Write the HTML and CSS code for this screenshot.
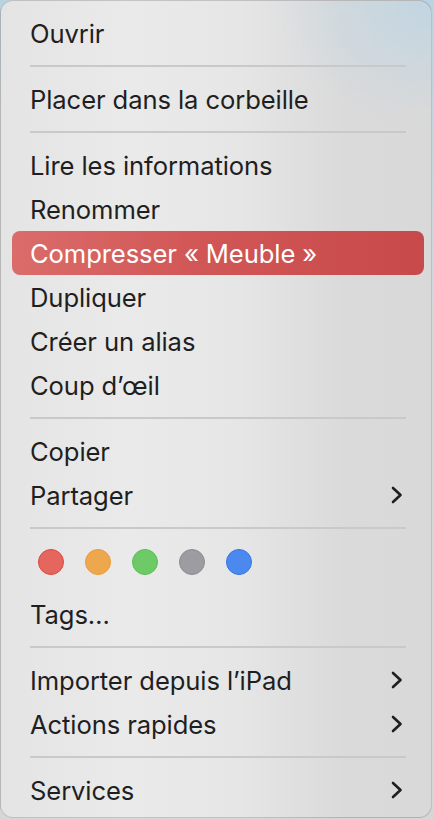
FILE: index.html
```html
<!DOCTYPE html>
<html lang="fr">
<head>
<meta charset="utf-8">
<title>Menu contextuel</title>
<link rel="stylesheet" href="styles.css">
</head>
<body>

<div class="menu">
    <div class="item">Ouvrir</div>
    <div class="sep"></div>
    <div class="item">Placer dans la corbeille</div>
    <div class="sep"></div>
    <div class="item">Lire les informations</div>
    <div class="item">Renommer</div>
    <div class="item cur">Compresser « Meuble »</div>
    <div class="item">Dupliquer</div>
    <div class="item">Créer un alias</div>
    <div class="item">Coup d’œil</div>
    <div class="sep"></div>
    <div class="item">Copier</div>
    <div class="item sub">Partager
        <svg class="arr" width="12" height="18" viewBox="0 0 12 18"><polyline points="2,2 9.5,9 2,16"/></svg>
    </div>
    <div class="sep"></div>
    <div class="tags">
        <i class="red"></i><i class="orange"></i><i class="green"></i><i class="gray"></i><i class="blue"></i>
    </div>
    <div class="item">Tags…</div>
    <div class="sep"></div>
    <div class="item sub">Importer depuis l’iPad
        <svg class="arr" width="12" height="18" viewBox="0 0 12 18"><polyline points="2,2 9.5,9 2,16"/></svg>
    </div>
    <div class="item sub">Actions rapides
        <svg class="arr" width="12" height="18" viewBox="0 0 12 18"><polyline points="2,2 9.5,9 2,16"/></svg>
    </div>
    <div class="sep"></div>
    <div class="item sub">Services
        <svg class="arr" width="12" height="18" viewBox="0 0 12 18"><polyline points="2,2 9.5,9 2,16"/></svg>
    </div>
</div>

</body>
</html>
```

FILE: styles.css
```css
html,body{margin:0;padding:0;}
body{width:434px;height:820px;overflow:hidden;background:linear-gradient(180deg,#b9d3e2 0%,#d4d8da 40%,#d6d6d6 100%);font-family:Inter,"Noto Sans",sans-serif;}

.menu{box-sizing:border-box;width:432px;height:818px;padding:10px 0 0;border:1px solid rgba(0,0,0,.16);border-radius:13px;overflow:hidden;
    background:radial-gradient(ellipse 160px 120px at 100% 0%,rgba(185,212,228,.75),rgba(185,212,228,0)),
    linear-gradient(90deg,#e4e4e4 0%,#eaeaea 30%,#e6e6e6 55%,#dadada 80%,#d9d9d9 100%);}

.item{display:flex;align-items:center;justify-content:space-between;height:44px;margin:0 7px 0 11px;padding:0 20px 0 18px;box-sizing:border-box;border-radius:8px;
    font-size:25.6px;color:#1f1f1f;letter-spacing:-.1px;}
.cur{color:#fff;background:linear-gradient(90deg,#da6c6a 0%,#d15756 45%,#c84949 100%);}

.arr{fill:none;stroke:#1f1f1f;stroke-width:2.6;stroke-linecap:round;stroke-linejoin:round;margin-right:1px;}

.sep{height:2px;margin:10px 25px 10px 29px;background:#c9c9c9;}

.tags{display:flex;gap:21px;height:53px;padding:10px 0 0 37px;box-sizing:border-box;}
.tags i{display:block;width:24px;height:24px;border-radius:50%;border:1.5px solid transparent;}
.tags .red{background:#e5665c;border-color:#e0463e;}
.tags .orange{background:#eda84e;border-color:#ea9a36;}
.tags .green{background:#6ec967;border-color:#5abf54;}
.tags .gray{background:#9d9ca0;border-color:#8c8b8f;}
.tags .blue{background:#4b89ef;border-color:#2f76ee;}
```
